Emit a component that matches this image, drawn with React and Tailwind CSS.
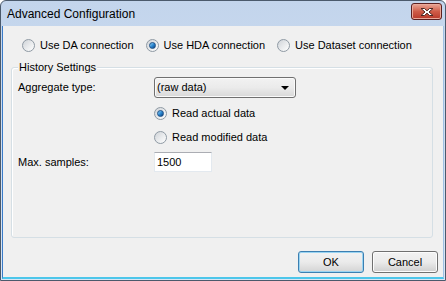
import { useState } from 'react'

const font = { fontFamily: '"Liberation Sans", Arial, sans-serif' }

function Radio({ checked, label, onClick }) {
  return (
    <button type="button" onClick={onClick} className="flex items-center h-[14px] text-[11px] text-black">
      <span className="relative flex h-[13px] w-[13px] items-center justify-center rounded-full border border-[#8f9aa4] bg-gradient-to-br from-[#cfd3d8] via-[#e8eaec] to-[#ffffff]">
        {checked ? (
          <span className="h-[7px] w-[7px] rounded-full border border-[#1c4f86] bg-gradient-to-br from-[#8fd2f4] via-[#2d8ad3] to-[#0c3f7c]" />
        ) : null}
      </span>
      <span className="ml-[5px] leading-none">{label}</span>
    </button>
  )
}

function Button({ children, primary }) {
  return (
    <button
      type="button"
      className={
        primary
          ? 'h-[22px] w-[66px] rounded-[3px] border border-[#3c7fb1] bg-gradient-to-b from-[#f2f2f2] via-[#ebebeb] to-[#d4d4d4] text-[11px] text-black shadow-[inset_0_0_0_1px_#9ad4f2]'
          : 'h-[22px] w-[66px] rounded-[3px] border border-[#707070] bg-gradient-to-b from-[#f2f2f2] via-[#ebebeb] to-[#cfcfcf] text-[11px] text-black shadow-[inset_0_0_0_1px_#fcfcfc]'
      }
    >
      {children}
    </button>
  )
}

export default function App() {
  const [connection, setConnection] = useState('hda')
  const [readMode, setReadMode] = useState('actual')
  const [samples, setSamples] = useState('1500')

  return (
    <div style={font} className="w-[446px] h-[281px] bg-white">
      <div className="flex h-full w-full flex-col rounded-t-[6px] border border-[#4b5a6c] bg-gradient-to-b from-[#c3d5ec] to-[#d9e6f5]">
        {/* title bar */}
        <div className="flex h-[25px] shrink-0 items-center justify-between pl-[6px] pr-[3px]">
          <span className="text-[12px] text-black">Advanced Configuration</span>
          <button
            type="button"
            className="mt-[-4px] flex h-[17px] w-[31px] items-center justify-center rounded-[3px] border border-[#5b2020] bg-gradient-to-b from-[#e8a798] via-[#cf5c48] to-[#b8382a] shadow-[inset_0_0_0_1px_#eaa99a]"
          >
            <svg width="14" height="10" viewBox="0 0 14 10">
              <path
                d="M1 1.5 L4.5 1.5 L7 3.8 L9.5 1.5 L13 1.5 L9 5 L13 8.5 L9.5 8.5 L7 6.2 L4.5 8.5 L1 8.5 L5 5 Z"
                fill="#ffffff"
                stroke="#4e2a24"
                strokeWidth="1"
                strokeLinejoin="round"
              />
            </svg>
          </button>
        </div>

        {/* client area */}
        <div className="mx-[1px] mb-[1px] flex flex-1 flex-col border-l border-r border-b-[2px] border-l-[#3a7bc8] border-r-[#9fc0e3] border-b-[#4cc6ea] bg-[#f0f0f0]">
          <div className="ml-[19px] mt-[12px] flex h-[14px] items-center gap-[12px]">
            <Radio label="Use DA connection" checked={connection === 'da'} onClick={() => setConnection('da')} />
            <Radio label="Use HDA connection" checked={connection === 'hda'} onClick={() => setConnection('hda')} />
            <Radio label="Use Dataset connection" checked={connection === 'ds'} onClick={() => setConnection('ds')} />
          </div>

          <div className="relative ml-[8px] mt-[15px] h-[171px] w-[422px] rounded-[3px] border border-[#d5dfe5] shadow-[inset_1px_1px_0_#ffffff]">
            <span className="absolute left-[6px] top-[-7px] bg-[#f0f0f0] px-[1px] text-[11px] leading-[13px] text-black">
              History Settings
            </span>

            <div className="ml-[6px] mt-[9px] flex h-[21px] items-center">
              <span className="w-[136px] text-[11px] text-black">Aggregate type:</span>
              <div className="flex h-[21px] w-[142px] items-center justify-between rounded-[3px] border border-[#707070] bg-gradient-to-b from-[#f2f2f2] via-[#ebebeb] to-[#d8d8d8] pl-[2px] pr-[6px] shadow-[inset_0_0_0_1px_#fafafa]">
                <span className="text-[11px] text-black">(raw data)</span>
                <svg width="8" height="4" viewBox="0 0 8 4">
                  <path d="M0 0 L8 0 L4 4 Z" fill="#000000" />
                </svg>
              </div>
            </div>

            <div className="ml-[142px] mt-[8px]">
              <Radio label="Read actual data" checked={readMode === 'actual'} onClick={() => setReadMode('actual')} />
            </div>
            <div className="ml-[142px] mt-[10px]">
              <Radio label="Read modified data" checked={readMode === 'modified'} onClick={() => setReadMode('modified')} />
            </div>

            <div className="ml-[6px] mt-[8px] flex h-[20px] items-center">
              <span className="w-[136px] text-[11px] text-black">Max. samples:</span>
              <input
                value={samples}
                onChange={(e) => setSamples(e.target.value)}
                className="h-[20px] w-[58px] border border-[#e3e9ef] border-t-[#abadb3] bg-white px-[2px] text-[11px] text-black outline-none"
              />
            </div>
          </div>

          <div className="mt-[13px] flex justify-end gap-[8px] pr-[5px]">
            <Button primary>OK</Button>
            <Button>Cancel</Button>
          </div>
        </div>
      </div>
    </div>
  )
}
